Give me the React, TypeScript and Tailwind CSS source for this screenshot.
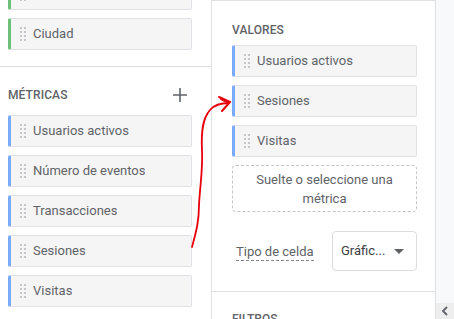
import React from 'react';

type Accent = 'green' | 'blue';

const DragHandle = () => (
  <div className="grid grid-cols-2 gap-x-[2px] gap-y-[2px] w-[6px] shrink-0">
    {Array.from({ length: 8 }).map((_, i) => (
      <span key={i} className="w-[2px] h-[2px] bg-[#c4c6c9]" />
    ))}
  </div>
);

const Chip = ({ label, accent = 'blue' }: { label: string; accent?: Accent }) => (
  <div
    className={`h-[32px] flex items-center gap-[7px] pl-[9px] bg-[#f5f5f5] border border-[#dfe1e4] rounded-[2px] border-l-[3px] ${
      accent === 'green' ? 'border-l-[#6dc077]' : 'border-l-[#7aabf8]'
    }`}
  >
    <DragHandle />
    <span className="text-[13px] text-[#5f6368] truncate">{label}</span>
  </div>
);

export default function App() {
  const metricas = ['Usuarios activos', 'Número de eventos', 'Transacciones', 'Sesiones', 'Visitas'];
  const valores = ['Usuarios activos', 'Sesiones', 'Visitas'];

  return (
    <div
      className="relative w-[454px] h-[319px] overflow-hidden bg-white flex"
      style={{ fontFamily: 'Roboto, "Liberation Sans", sans-serif' }}
    >
      {/* Panel izquierdo */}
      <div className="w-[212px] shrink-0 border-r border-[#e0e0e0] flex flex-col">
        <div className="px-[8px] pr-[19px] pb-[16px] flex flex-col gap-[8px] border-b border-[#e0e0e0]">
          <div className="mt-[-22px]">
            <Chip label="" accent="green" />
          </div>
          <Chip label="Ciudad" accent="green" />
        </div>
        <div className="px-[8px] pr-[19px] pt-[20px]">
          <div className="flex items-center justify-between h-[16px] mb-[12px]">
            <span className="text-[12px] font-medium text-[#5f6368] tracking-[0.1px]">MÉTRICAS</span>
            <svg width="14" height="14" viewBox="0 0 14 14" className="mr-[5px]">
              <path d="M7 0v14M0 7h14" stroke="#5f6368" strokeWidth="1.6" />
            </svg>
          </div>
          <div className="flex flex-col gap-[8px]">
            {metricas.map((m) => (
              <Chip key={m} label={m} />
            ))}
          </div>
        </div>
      </div>

      {/* Panel derecho */}
      <div className="w-[224px] shrink-0 border-r border-[#e0e0e0] flex flex-col">
        <div className="h-[7px] border-b border-[#e0e0e0]" />
        <div className="pl-[20px] pr-[18px] pt-[21px] pb-[20px] border-b border-[#e0e0e0]">
          <div className="h-[16px] flex items-center mb-[7px]">
            <span className="text-[12px] font-medium text-[#5f6368] tracking-[0.1px]">VALORES</span>
          </div>
          <div className="flex flex-col gap-[8px]">
            {valores.map((v) => (
              <Chip key={v} label={v} />
            ))}
            <div className="h-[47px] border border-dashed border-[#c4c6c9] rounded-[4px] flex items-center justify-center text-center text-[13px] leading-[19px] text-[#5f6368] px-[10px]">
              Suelte o seleccione una métrica
            </div>
          </div>
          <div className="mt-[19px] flex items-center justify-between">
            <span className="ml-[4px] mt-[2px] text-[13px] text-[#5f6368] border-b border-dashed border-[#80868b] leading-[16px]">
              Tipo de celda
            </span>
            <div className="w-[85px] h-[40px] border border-[#dadce0] rounded-[4px] flex items-center pl-[8px] pr-[12px] justify-between">
              <span className="text-[13px] text-[#3c4043]">Gráfic...</span>
              <svg width="10" height="5" viewBox="0 0 10 5">
                <path d="M0 0h10L5 5z" fill="#5f6368" />
              </svg>
            </div>
          </div>
        </div>
        <div className="px-[20px] pt-[14px]">
          <span className="text-[12px] font-medium text-[#5f6368]">FILTROS</span>
        </div>
      </div>

      {/* Franja lateral */}
      <div className="flex-1 bg-[#f8f9fa] flex flex-col justify-end">
        <div className="h-[16px] bg-[#eeeeee] flex items-center justify-center">
          <svg width="8" height="10" viewBox="0 0 8 10">
            <path d="M6 1L2 5l4 4" stroke="#5f6368" strokeWidth="1.8" fill="none" />
          </svg>
        </div>
      </div>

      {/* Flecha roja */}
      <svg className="absolute left-0 top-0 pointer-events-none" width="454" height="319">
        <path
          d="M192 247 C196 232 199 222 199 205 C200 185 203 170 202 150 C201 130 203 118 210 110 C215 104 222 103 229 103"
          stroke="#e8000b"
          strokeWidth="1.8"
          fill="none"
          strokeLinecap="round"
        />
        <path
          d="M219 97 L230 102 L222 111 M221 99 L229 103"
          stroke="#e8000b"
          strokeWidth="2"
          fill="none"
          strokeLinecap="round"
          strokeLinejoin="round"
        />
      </svg>
    </div>
  );
}
